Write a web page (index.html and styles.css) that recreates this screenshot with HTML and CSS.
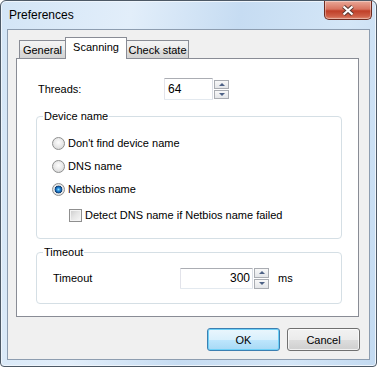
FILE: index.html
```html
<!DOCTYPE html>
<html lang="en">
<head>
  <meta charset="UTF-8" />
  <title>Preferences</title>
  <link rel="stylesheet" href="styles.css">
</head>
<body>
  <div class="window">
    <div class="titlebar">
      <span class="title">Preferences</span>
      <button class="close" aria-label="Close">
        <svg width="14" height="11" viewBox="0 0 14 11">
          <path d="M2.5 1.5 L11.5 9.5 M11.5 1.5 L2.5 9.5" stroke="#5b3a33" stroke-width="4.2" fill="none"/>
          <path d="M2.5 1.5 L11.5 9.5 M11.5 1.5 L2.5 9.5" stroke="#ffffff" stroke-width="2.2" fill="none"/>
        </svg>
      </button>
    </div>

    <div class="client">
      <div class="tabs">
        <div class="tab tab-general">General</div>
        <div class="tab tab-scanning active">Scanning</div>
        <div class="tab tab-check">Check state</div>
      </div>

      <div class="panel">
        <div class="field-row threads-row">
          <span class="field-label">Threads:</span>
          <div class="spin">
            <input class="num num-threads" type="text" value="64">
            <div class="spin-btns spin-small">
              <span class="spin-btn up"></span>
              <span class="spin-btn down"></span>
            </div>
          </div>
        </div>

        <fieldset class="group">
          <legend>Device name</legend>
          <div class="group-body device-body">
            <label class="opt"><input type="radio" name="dev"> Don't find device name</label>
            <label class="opt"><input type="radio" name="dev"> DNS name</label>
            <label class="opt"><input type="radio" name="dev" checked> Netbios name</label>
            <label class="opt sub"><input type="checkbox"> Detect DNS name if Netbios name failed</label>
          </div>
        </fieldset>

        <fieldset class="group timeout-group">
          <legend>Timeout</legend>
          <div class="group-body timeout-body">
            <div class="field-row">
              <span class="field-label timeout-label">Timeout</span>
              <div class="spin">
                <input class="num num-timeout" type="text" value="300">
                <div class="spin-btns spin-tall">
                  <span class="spin-btn up"></span>
                  <span class="spin-btn down"></span>
                </div>
              </div>
              <span class="unit">ms</span>
            </div>
          </div>
        </fieldset>
      </div>

      <div class="buttons">
        <button class="btn default">OK</button>
        <button class="btn">Cancel</button>
      </div>
    </div>
  </div>
</body>
</html>
```

FILE: styles.css
```css
* { box-sizing:border-box; }
body {
  margin:0; background:#fff;
  font-family:"Liberation Sans", Arial, sans-serif;
  font-size:11px; color:#000;
}

/* window frame */
.window {
  width:377px; height:367px;
  border:1px solid #4d5966; border-radius:6px 6px 4px 4px;
  padding:0 6px 6px;
  background:linear-gradient(100deg, #d3e5f6 0%, #e2eefa 30%, #c6dcf2 55%, #d4e6f7 80%, #c3daf1 100%);
  box-shadow:inset 0 0 0 1px #eef5fc;
  display:flex; flex-direction:column;
}
.titlebar {
  height:28px; flex:none;
  display:flex; justify-content:space-between; align-items:flex-start;
}
.title {
  padding-left:2px; line-height:28px;
  font-size:12px; color:#000;
}
.close {
  width:48px; height:19px; margin-right:-2px; padding:0;
  border:1px solid #6e2b20; border-top:none;
  border-radius:0 0 5px 5px;
  background:linear-gradient(#e9a898 0%, #d87460 45%, #c03f28 55%, #cf6048 85%, #e08c74 100%);
  box-shadow:inset 0 0 0 1px rgba(255,255,255,0.35);
  display:flex; align-items:center; justify-content:center;
}

/* client area */
.client {
  flex:1;
  border:1px solid #8d9db0;
  background:#f0f0f0;
  padding:7px 10px 8px 8px;
  display:flex; flex-direction:column;
}

/* tabs */
.tabs {
  display:flex; align-items:flex-end;
  padding-left:3px;
}
.tab {
  height:18px; line-height:18px;
  text-align:center;
  border:1px solid #898c95; border-bottom:none;
  background:linear-gradient(#f4f4f4 0%, #ebebeb 50%, #dddddd 51%, #d4d4d4 100%);
  margin-left:-1px;
}
.tab-general { width:47px; margin-left:0; }
.tab-scanning { width:62px; }
.tab-check { width:63px; }
.tab.active {
  height:22px; line-height:19px;
  margin-bottom:-1px;
  background:#fff;
  position:relative; z-index:1;
}

/* tab panel */
.panel {
  flex:1;
  background:#fff;
  border:1px solid #898c95;
  padding:19px 16px 0 21px;
}
.field-row {
  display:flex; align-items:center;
  height:22px;
}
.field-label { width:126px; }
.timeout-label { width:127px; }
.field-row .unit { margin-left:9px; }

.spin { display:flex; align-items:center; gap:1px; }
.num {
  margin:0; padding:0 3px;
  font-family:"Liberation Sans", Arial, sans-serif; font-size:12px;
  color:#000; background:#fff;
  border:1px solid #abadb3;
  border-color:#abadb3 #dbdfe6 #e3e9ef #e2e3ea;
  border-radius:1px;
}
.num-threads { width:49px; height:22px; }
.num-timeout { width:73px; height:21px; text-align:right; padding-right:2px; }

.spin-btns {
  width:15px;
  display:flex; flex-direction:column; gap:1px;
}
.spin-small { height:19px; }
.spin-tall { height:21px; }
.spin-btn {
  flex:1;
  border:1px solid #a9acb2;
  background:linear-gradient(#f8f8f8, #e3e5e8);
  display:flex; align-items:center; justify-content:center;
}
.spin-btn.up::before {
  content:"";
  border-left:3px solid transparent; border-right:3px solid transparent;
  border-bottom:3px solid #4d6185;
}
.spin-btn.down::before {
  content:"";
  border-left:3px solid transparent; border-right:3px solid transparent;
  border-top:3px solid #4d6185;
}

/* group boxes */
.group {
  width:306px;
  margin:10px 0 0 -2px; padding:0;
  border:1px solid #d5dfe5; border-radius:4px;
  min-inline-size:0;
}
.group legend {
  margin-left:6px; padding:0 1px;
  line-height:13px;
}
.timeout-group { margin-top:7px; }
.device-body { padding:14px 0 16px 15px; }
.timeout-body { padding:8px 0 14px 16px; }

.opt {
  display:flex; align-items:center; gap:3px;
  height:13px; line-height:13px;
}
.opt + .opt { margin-top:10px; }
.opt.sub { margin-top:13px; padding-left:17px; }

.opt input[type=radio] {
  appearance:none; -webkit-appearance:none;
  width:13px; height:13px; margin:0;
  border:1px solid #8e8f8f; border-radius:50%;
  background:radial-gradient(circle at 50% 40%, #fdfdfd 0, #e6e6e6 55%, #cfcfcf 100%);
}
.opt input[type=radio]:checked {
  background:radial-gradient(circle at 50% 50%, #8fe0ff 0, #2a8fdc 1.6px, #155da6 2.8px, #0e3c6d 3.6px, #e9e9e9 4.2px, #d3d3d3 100%);
}
.opt input[type=checkbox] {
  appearance:none; -webkit-appearance:none;
  width:13px; height:13px; margin:0;
  border:1px solid #8f8f8f;
  box-shadow:inset 0 0 0 1px #f4f4f4;
  background:linear-gradient(135deg, #cbcbcb 0%, #e6e6e6 50%, #f8f8f8 100%);
}

/* dialog buttons */
.buttons {
  display:flex; justify-content:flex-end; gap:7px;
  margin-top:11px; margin-right:-1px;
}
.btn {
  width:73px; height:23px; padding:0;
  font-family:"Liberation Sans", Arial, sans-serif; font-size:11px; color:#000;
  border:1px solid #707070; border-radius:3px;
  background:linear-gradient(#f2f2f2 0%, #ebebeb 50%, #dddddd 51%, #cfcfcf 100%);
  box-shadow:inset 0 0 0 1px rgba(255,255,255,0.7);
}
.btn.default {
  border-color:#3c7fb1;
  background:linear-gradient(#eaf6fd 0%, #d9f0fc 50%, #bee6fd 51%, #a7d9f5 100%);
  box-shadow:inset 0 0 0 1px #6ed0f7, 0 0 0 0 transparent;
}
```
